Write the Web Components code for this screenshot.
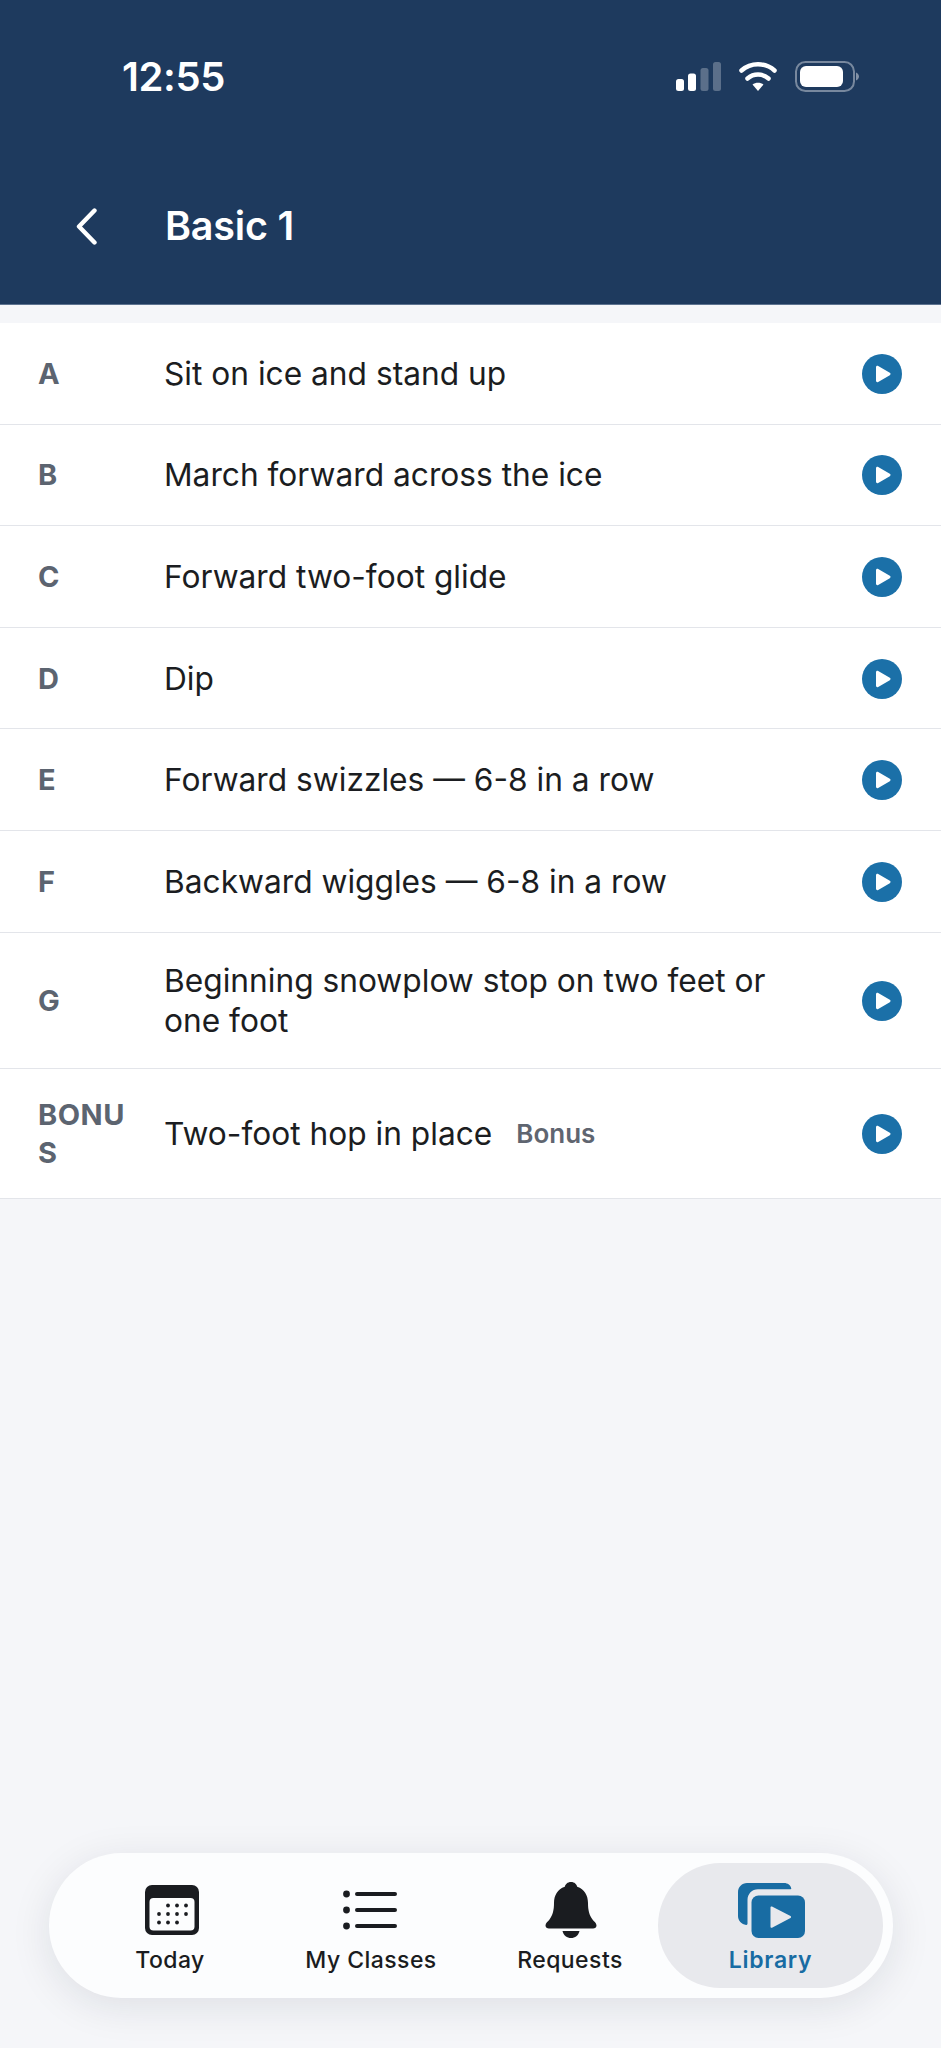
<!DOCTYPE html>
<html lang="en"><head><meta charset="utf-8"><title>Basic 1</title>
<style>
html,body{margin:0;padding:0;background:#f5f6f9}
body{font-family:Inter,"Liberation Sans",sans-serif;-webkit-font-smoothing:antialiased}
</style></head><body>
<app-screen>
  <nav-header slot="header" title="Basic 1"></nav-header>
  <lesson-row code="A" text="Sit on ice and stand up"></lesson-row>
  <lesson-row code="B" text="March forward across the ice"></lesson-row>
  <lesson-row code="C" text="Forward two-foot glide"></lesson-row>
  <lesson-row code="D" text="Dip"></lesson-row>
  <lesson-row code="E" text="Forward swizzles — 6-8 in a row"></lesson-row>
  <lesson-row code="F" text="Backward wiggles — 6-8 in a row"></lesson-row>
  <lesson-row code="G" text="Beginning snowplow stop on two feet or one foot" tall></lesson-row>
  <lesson-row code="BONUS" text="Two-foot hop in place" tag="Bonus" bonus></lesson-row>
  <tab-bar slot="tabs"></tab-bar>
</app-screen>
<script>
class AppScreen extends HTMLElement{constructor(){super();this.attachShadow({mode:'open'}).innerHTML=`
<style>
:host{display:flex;flex-direction:column;width:941px;height:2048px;overflow:hidden;background:#f5f6f9;color:#1a1c20;box-sizing:border-box}
.list{margin-top:18px;flex:1;display:block;min-height:0}
.tabs{padding:0 48px 50px 49px}
</style>
<slot name="header"></slot>
<div class="list"><slot></slot></div>
<div class="tabs"><slot name="tabs"></slot></div>`}}

class NavHeader extends HTMLElement{constructor(){super();this.attachShadow({mode:'open'}).innerHTML=`
<style>
:host{display:block;height:305px;box-sizing:border-box;background:#1e3a5e;border-bottom:1px solid #5d7390;color:#fff}
.status{display:flex;align-items:center;height:29px;padding:62px 82px 0 122px;justify-content:space-between}
.time{font-size:40px;font-weight:600;line-height:29px;letter-spacing:-.4px}
.sys{display:flex;align-items:center}
.sys svg{display:block}
.bar{display:flex;align-items:center;margin-top:118px;height:35px;padding-left:74px}
.bar svg{display:block;margin-right:66px}
h1{margin:0;font-size:39.5px;font-weight:600;line-height:35px;letter-spacing:-.2px}
</style>
<div class="status"><span class="time">12:55</span>
<span class="sys"><svg width="184" height="32" viewBox="0 0 184 32" fill="#fff">
<rect x="1" y="18" width="8" height="12" rx="2.5"/><rect x="13" y="12.5" width="8" height="17.5" rx="2.5"/>
<g opacity=".27"><rect x="25.5" y="7" width="8" height="23" rx="2.5"/><rect x="38" y="1" width="8" height="29" rx="2.5"/></g>
<path d="M66.500 9.500C71 5.500 76.500 3.300 83 3.300S95 5.500 99.500 9.500" fill="none" stroke="#fff" stroke-width="4.500" stroke-linecap="round"/>
<path d="M72.500 17.500C75.500 15 79 13.600 83 13.600S90.500 15 93.500 17.500" fill="none" stroke="#fff" stroke-width="4.500" stroke-linecap="round"/>
<path d="M77.500 23.500C79 22.400 81 21.800 83 21.800S87 22.400 88.500 23.500L83 30Z"/>
<rect x="121" y="1" width="58" height="29" rx="9.5" fill="none" stroke="#fff" stroke-opacity=".4" stroke-width="2"/>
<rect x="125" y="5" width="43" height="21" rx="6"/>
<path d="M181 11.500C183 12.500 184 14 184 15.500S183 18.500 181 19.500Z" opacity=".45"/>
</svg></span></div>
<div class="bar"><svg width="25" height="37" viewBox="0 0 25 37" fill="none" stroke="#fff" stroke-width="4.400" stroke-linecap="round" stroke-linejoin="round"><path d="M20.500 2.500L5 18.500L20.500 34.500"/></svg><h1></h1></div>`;
this.shadowRoot.querySelector('h1').textContent=this.getAttribute('title')}}

class LessonRow extends HTMLElement{constructor(){super();this.attachShadow({mode:'open'}).innerHTML=`
<style>
:host{display:flex;align-items:center;box-sizing:border-box;height:101.6px;background:#fff;border-bottom:1px solid #e3e5ea;padding:1px 39.5px 0 38px}
:host([tall]){height:136px}
:host([bonus]){height:130px}
.code{width:92px;margin-right:34px;font-size:29px;font-weight:700;line-height:38px;color:#5c6470;overflow-wrap:anywhere;flex:none;letter-spacing:.5px}
.text{flex:1;min-width:0;font-size:31.7px;font-weight:400;line-height:40px;color:#1b1d21;padding-right:70px}
:host([bonus]) .text{padding-top:2px}
.tag{font-size:26px;font-weight:600;color:#5f6570;margin-left:24px;position:relative;top:-2px}
svg{flex:none;display:block}
</style>
<div class="code"></div>
<div class="text"><span class="t"></span><span class="tag"></span></div>
<svg width="40" height="40" viewBox="0 0 40 40"><circle cx="20" cy="20" r="20" fill="#1b70a8"/><path d="M14 13.200C14 12 15.200 11.400 16.200 12L27.800 18.800C28.800 19.400 28.800 20.600 27.800 21.200L16.200 28C15.200 28.600 14 28 14 26.800Z" fill="#fff"/></svg>`;
const s=this.shadowRoot;s.querySelector('.code').textContent=this.getAttribute('code');s.querySelector('.t').textContent=this.getAttribute('text');
const tag=this.getAttribute('tag');if(tag)s.querySelector('.tag').textContent=tag;else s.querySelector('.tag').remove();}}

class TabItem extends HTMLElement{constructor(){super();this.attachShadow({mode:'open'}).innerHTML=`
<style>
:host{display:flex;flex-direction:column;align-items:center;box-sizing:border-box;height:125px;padding-top:19px;border-radius:63px;color:#1a1c20}
:host([active]){background:#e8e9ed;color:#186ca3}
.ic{height:56px;display:flex;align-items:center;justify-content:center;margin-bottom:8px}
.lb{font-size:23px;line-height:28px;font-weight:500;letter-spacing:.45px;white-space:nowrap}
:host([active]) .lb{font-weight:600;letter-spacing:.7px}
</style>
<div class="ic"><slot name="icon"></slot></div><div class="lb"><slot></slot></div>`}}

class TabBar extends HTMLElement{constructor(){super();this.attachShadow({mode:'open'}).innerHTML=`
<style>
:host{display:grid;grid-template-columns:180px 222px 176px 225px;box-sizing:border-box;height:145px;padding:10px 10px 10px 31px;background:#fcfdfe;border-radius:73px;box-shadow:0 8px 40px rgba(20,30,50,.10)}
svg{display:block}
</style>
<tab-item><svg slot="icon" style="margin-left:3px" width="54" height="50" viewBox="0 0 54 50"><rect width="54" height="50" rx="7" fill="#1a1c20"/><rect x="4.5" y="13" width="45" height="32.5" rx="4" fill="#fcfdfe"/><g fill="#1a1c20"><circle cx="23" cy="20.5" r="1.9"/><circle cx="32" cy="20.5" r="1.9"/><circle cx="41" cy="20.5" r="1.9"/><circle cx="14" cy="29" r="1.9"/><circle cx="23" cy="29" r="1.9"/><circle cx="32" cy="29" r="1.9"/><circle cx="41" cy="29" r="1.9"/><circle cx="14" cy="37.5" r="1.9"/><circle cx="23" cy="37.5" r="1.9"/><circle cx="32" cy="37.5" r="1.9"/></g></svg>Today</tab-item>
<tab-item><svg slot="icon" style="margin-right:2px" width="54" height="40" viewBox="0 0 54 40"><g fill="#1a1c20"><circle cx="3.5" cy="4" r="3.4"/><circle cx="3.5" cy="20" r="3.4"/><circle cx="3.5" cy="36" r="3.4"/></g><g stroke="#1a1c20" stroke-width="4" stroke-linecap="round"><path d="M14 4H52M14 20H52M14 36H52"/></g></svg>My Classes</tab-item>
<tab-item><svg slot="icon" style="margin-left:2px" width="52" height="56" viewBox="0 0 52 56" fill="#1a1c20"><path d="M26 0C29.500 0 31.700 2.300 32.200 4.800C39.500 7.200 43 13.500 43 21C43 28 44.200 33 47.500 37.500C49 39.500 51.500 41 51.500 43.500C51.500 45.500 50 46.500 48 46.500H4C2 46.500 .5 45.500 .5 43.500C.5 41 3 39.500 4.500 37.500C7.800 33 9 28 9 21C9 13.500 12.500 7.200 19.800 4.800C20.300 2.300 22.500 0 26 0Z"/><path d="M17.500 49H34.500C33.500 53.500 30 56 26 56S18.500 53.500 17.500 49Z"/></svg>Requests</tab-item>
<tab-item active><svg slot="icon" style="margin-left:2px" width="67" height="55" viewBox="0 0 67 55"><path d="M9 0H46C49.800 0 52.700 2.200 53.300 5.500C53.300 6 53 6.300 52.500 6.300H20C14 6.300 9.500 11 9.500 17V40.500C9.500 41.500 9 42 8.200 41.900C3.500 41.300 0 37.500 0 33V9C0 4 4 0 9 0Z" fill="#186ca3"/><rect x="13.5" y="12.5" width="53.500" height="42.500" rx="7" fill="#186ca3"/><path d="M32.500 24.500C32.500 23.700 33.300 23.200 34 23.600L52.500 33C53.300 33.400 53.300 34.500 52.500 35L34 44.700C33.300 45.100 32.500 44.600 32.500 43.800Z" fill="#e8e9ed"/></svg>Library</tab-item>`}}

customElements.define('tab-item',TabItem);
customElements.define('tab-bar',TabBar);
customElements.define('lesson-row',LessonRow);
customElements.define('nav-header',NavHeader);
customElements.define('app-screen',AppScreen);
</script>
</body></html>
